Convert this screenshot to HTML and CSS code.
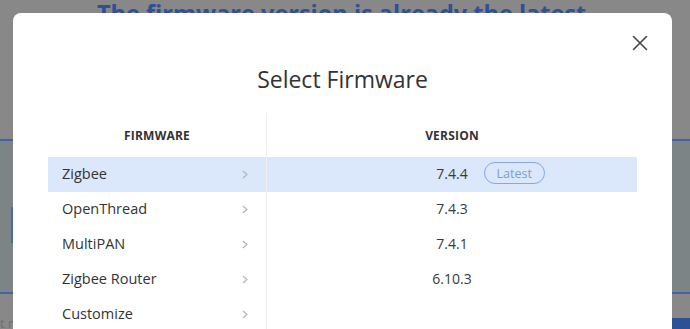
FILE: index.html
```html
<!DOCTYPE html>
<html lang="en">
<head>
<meta charset="utf-8">
<title>Select Firmware</title>
<link rel="stylesheet" href="styles.css">
</head>
<body>
<div class="page">
  <h1 class="page-title">The firmware version is already the latest</h1>
  <div class="panel"><span class="panel-mark"></span></div>
  <div class="page-foot">
    <span class="foot-text">t r</span>
    <span class="foot-btn"></span>
  </div>
</div>

<div class="modal">
  <button class="close" aria-label="Close">
    <svg width="16" height="16" viewBox="0 0 16 16"><path d="M1.5 1.5 L14.5 14.5 M14.5 1.5 L1.5 14.5" stroke="#454545" stroke-width="1.6" fill="none" stroke-linecap="round"/></svg>
  </button>
  <h2 class="modal-title">Select Firmware</h2>
  <div class="fw-table">
    <div class="col col-fw">
      <div class="head">FIRMWARE</div>
      <div class="row active"><span>Zigbee</span><svg class="chev" width="6" height="9" viewBox="0 0 6 9"><path d="M1 1 L5 4.5 L1 8" stroke="#b3b3b3" stroke-width="1.1" fill="none"/></svg></div>
      <div class="row"><span>OpenThread</span><svg class="chev" width="6" height="9" viewBox="0 0 6 9"><path d="M1 1 L5 4.5 L1 8" stroke="#b3b3b3" stroke-width="1.1" fill="none"/></svg></div>
      <div class="row"><span>MultiPAN</span><svg class="chev" width="6" height="9" viewBox="0 0 6 9"><path d="M1 1 L5 4.5 L1 8" stroke="#b3b3b3" stroke-width="1.1" fill="none"/></svg></div>
      <div class="row"><span>Zigbee Router</span><svg class="chev" width="6" height="9" viewBox="0 0 6 9"><path d="M1 1 L5 4.5 L1 8" stroke="#b3b3b3" stroke-width="1.1" fill="none"/></svg></div>
      <div class="row"><span>Customize</span><svg class="chev" width="6" height="9" viewBox="0 0 6 9"><path d="M1 1 L5 4.5 L1 8" stroke="#b3b3b3" stroke-width="1.1" fill="none"/></svg></div>
    </div>
    <div class="col col-ver">
      <div class="head">VERSION</div>
      <div class="row active"><span class="ver">7.4.4<span class="badge">Latest</span></span></div>
      <div class="row"><span class="ver">7.4.3</span></div>
      <div class="row"><span class="ver">7.4.1</span></div>
      <div class="row"><span class="ver">6.10.3</span></div>
      <div class="row"></div>
    </div>
  </div>
</div>
</body>
</html>
```
FILE: styles.css
```css
* { box-sizing: border-box; }
html, body {
  margin: 0;
  width: 690px;
  height: 329px;
  overflow: hidden;
}
body {
  background: #888888;
  font-family: "Open Sans", "Noto Sans", sans-serif;
  position: relative;
}

/* dimmed page behind the dialog */
.page {
  display: flex;
  flex-direction: column;
  height: 329px;
}
.page-title {
  margin: 0;
  padding: 0 0 0 97px;
  font-family: "Open Sans", sans-serif;
  font-weight: 700;
  font-size: 23.5px;
  line-height: 30px;
  margin-top: -2px;
  color: #2f5098;
  white-space: nowrap;
  height: 145px;
}
.panel {
  height: 155px;
  background: #7c8486;
  border-top: 2px solid #4063a8;
  border-bottom: 2px solid #4063a8;
  position: relative;
  margin-top: -4px;
}
.panel-mark {
  position: absolute;
  left: 11px;
  top: 66px;
  width: 2px;
  height: 36px;
  background: #4a6aa8;
}
.page-foot {
  display: flex;
  justify-content: space-between;
  align-items: flex-end;
  flex: 1;
}
.foot-text {
  font-size: 13px;
  color: #6e6e6e;
  line-height: 12px;
}
.foot-btn {
  width: 20px;
  height: 11px;
  background: #2c5195;
}

/* dialog */
.modal {
  position: absolute;
  left: 13px;
  top: 13px;
  width: 659px;
  height: 340px;
  background: #ffffff;
  border-radius: 8px;
}
.close {
  position: absolute;
  top: 21px;
  right: 23px;
  width: 18px;
  height: 18px;
  padding: 1px;
  border: 0;
  background: none;
  display: flex;
  align-items: center;
  justify-content: center;
}
.modal-title {
  margin: 51px 0 0;
  text-align: center;
  font-weight: 500;
  font-size: 23px;
  line-height: 30px;
  color: #333333;
}
.fw-table {
  display: grid;
  grid-template-columns: 219px 370px;
  margin: 19px 35px 0;
}
.col-fw {
  border-right: 1px solid #efefef;
}
.head {
  height: 44px;
  display: flex;
  align-items: center;
  justify-content: center;
  font-size: 12px;
  font-weight: 700;
  color: #333333;
  letter-spacing: 0.2px;
}
.row {
  height: 35px;
  display: flex;
  align-items: center;
  padding-bottom: 3px;
  font-size: 14.5px;
  color: #333333;
}
.row.active {
  background: #dbe7fb;
}
.col-fw .row {
  justify-content: space-between;
  padding-left: 14px;
  padding-right: 18px;
}
.col-fw .chev {
  margin-top: 2px;
}
.col-ver .row {
  justify-content: center;
}
.ver {
  position: relative;
  font-size: 14px;
  color: #3a3a3a;
}
.badge {
  position: absolute;
  left: calc(100% + 16px);
  top: 50%;
  transform: translateY(-50%);
  width: 61px;
  height: 22px;
  border: 1.5px solid #86a8e4;
  border-radius: 11px;
  display: flex;
  align-items: center;
  justify-content: center;
  font-size: 12.5px;
  color: #7c9cd8;
}
```
